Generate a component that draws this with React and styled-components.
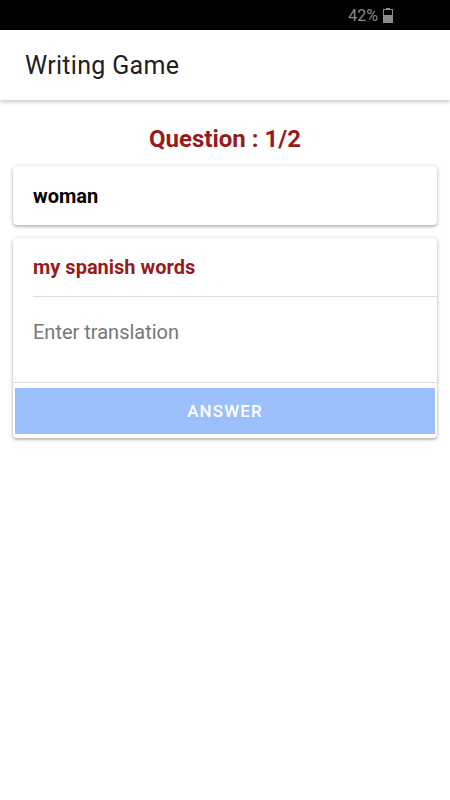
import React from 'react'
import styled, { createGlobalStyle } from 'styled-components'

const GlobalStyle = createGlobalStyle`
  html, body {
    margin: 0;
    padding: 0;
    background: #ffffff;
    font-family: Roboto, "Noto Sans", sans-serif;
  }
  * { box-sizing: border-box; }
`

const Screen = styled.div`
  width: 450px;
  height: 800px;
  display: flex;
  flex-direction: column;
  background: #ffffff;
`

const StatusBar = styled.div`
  height: 30px;
  background: #000000;
  display: flex;
  align-items: center;
  justify-content: flex-end;
  gap: 5px;
  padding-right: 57px;
  color: #8c8c8c;
  font-size: 16px;
`

const Battery = () => (
  <svg width="10" height="15" viewBox="0 0 10 15">
    <rect x="3" y="0" width="4" height="2" fill="#8c8c8c" />
    <rect x="0.5" y="1.5" width="9" height="13" fill="none" stroke="#8c8c8c" />
    <rect x="1" y="7" width="8" height="7.5" fill="#8c8c8c" />
  </svg>
)

const AppBar = styled.header`
  height: 70px;
  display: flex;
  align-items: center;
  padding-left: 25px;
  background: #ffffff;
  box-shadow: 0 2px 4px rgba(0, 0, 0, 0.22);
  position: relative;
  z-index: 1;
`

const AppTitle = styled.h1`
  margin: 0;
  font-size: 25px;
  font-weight: 400;
  color: #212121;
  letter-spacing: 0.3px;
`

const Content = styled.main`
  display: flex;
  flex-direction: column;
  padding: 23px 13px 0;
`

const Question = styled.div`
  text-align: center;
  color: #981b1c;
  font-size: 24px;
  font-weight: 700;
  line-height: 32px;
  margin-bottom: 11px;
`

const Card = styled.section`
  background: #ffffff;
  border-radius: 4px;
  box-shadow: 0 1px 4px rgba(0, 0, 0, 0.25), 0 2px 2px rgba(0, 0, 0, 0.12);
  margin-bottom: ${p => p.$gap || 0}px;
  overflow: hidden;
`

const Word = styled.div`
  height: 59px;
  display: flex;
  align-items: center;
  padding-left: 20px;
  font-size: 20px;
  font-weight: 700;
  color: #000000;
`

const Field = styled.div`
  padding-left: 20px;
`

const Label = styled.div`
  height: 59px;
  display: flex;
  align-items: center;
  font-size: 20px;
  font-weight: 700;
  color: #981b1c;
  border-bottom: 1px solid #dddddd;
`

const Input = styled.input`
  display: block;
  width: 100%;
  height: 85px;
  border: none;
  outline: none;
  padding: 0 0 16px;
  font-family: Roboto, sans-serif;
  font-size: 20px;
  color: #333333;
  background: transparent;
  &::placeholder {
    color: #777777;
  }
`

const Footer = styled.div`
  border-top: 1px solid #dddddd;
  padding: 5px 2px 4px;
`

const AnswerButton = styled.button`
  width: 100%;
  height: 46px;
  border: none;
  background: #9cc0fc;
  color: #ffffff;
  font-family: Roboto, sans-serif;
  font-size: 17px;
  font-weight: 500;
  letter-spacing: 1.1px;
`

export default function App() {
  return (
    <>
      <GlobalStyle />
      <Screen>
        <StatusBar>
          <span>42%</span>
          <Battery />
        </StatusBar>
        <AppBar>
          <AppTitle>Writing Game</AppTitle>
        </AppBar>
        <Content>
          <Question>Question : 1/2</Question>
          <Card $gap={13}>
            <Word>woman</Word>
          </Card>
          <Card>
            <Field>
              <Label>my spanish words</Label>
              <Input placeholder="Enter translation" />
            </Field>
            <Footer>
              <AnswerButton>ANSWER</AnswerButton>
            </Footer>
          </Card>
        </Content>
      </Screen>
    </>
  )
}
